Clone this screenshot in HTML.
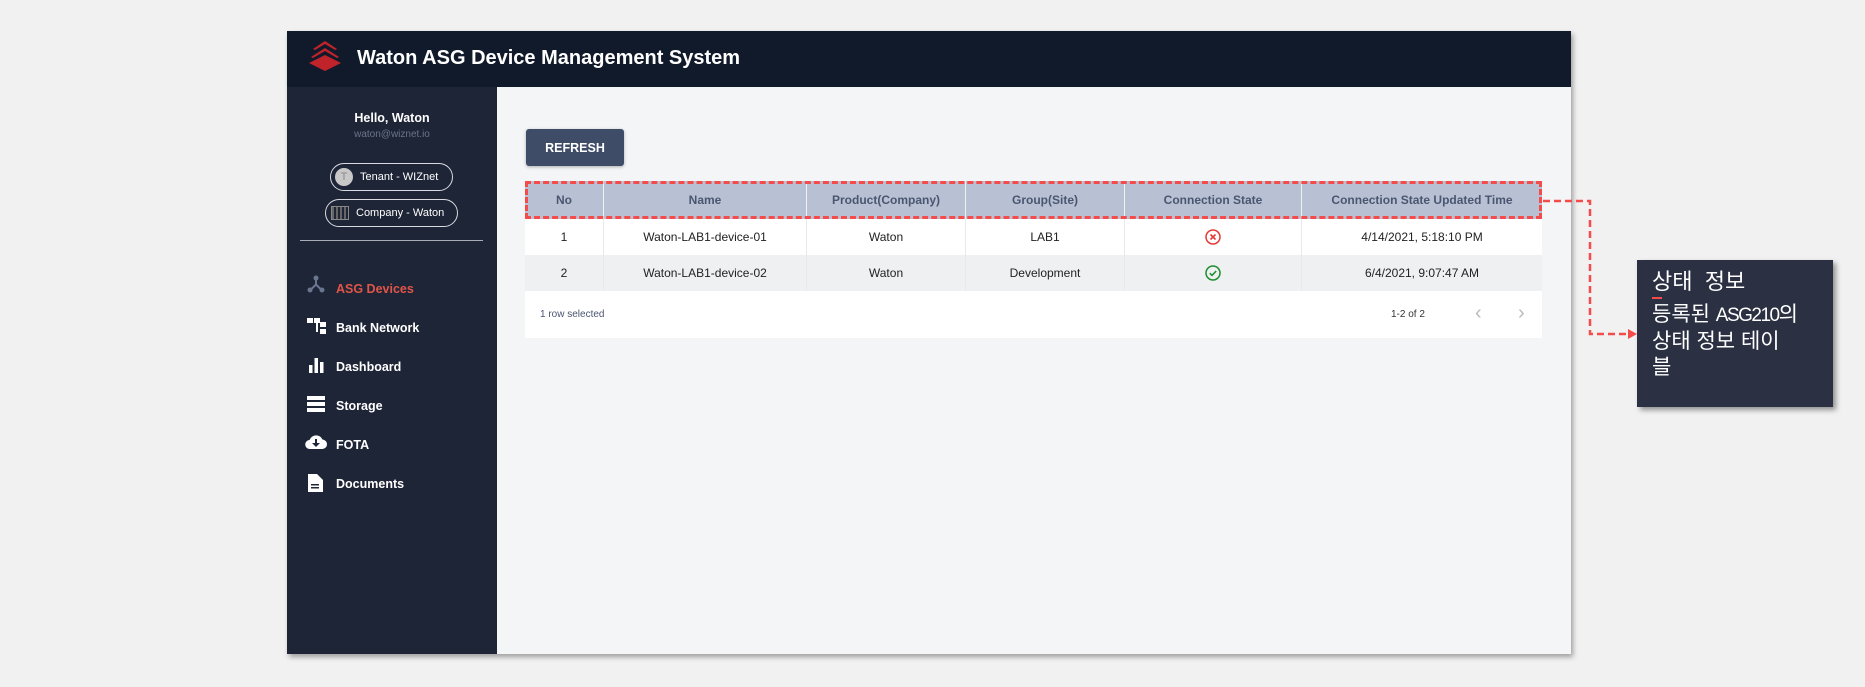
<!DOCTYPE html>
<html><head><meta charset="utf-8"><style>
*{box-sizing:border-box;margin:0;padding:0}
body{width:1865px;height:687px;background:#f1f1f1;position:relative;overflow:hidden;font-family:"Liberation Sans",sans-serif}
.frame{position:absolute;left:287px;top:31px;width:1284px;height:623px;background:#f4f5f7;box-shadow:2px 3px 5px rgba(0,0,0,.35)}
.hdr{position:absolute;left:0;top:0;width:1284px;height:56px;background:#111a2a}
.title{position:absolute;left:70px;top:16px;color:#fff;font-size:20px;font-weight:bold}
.side{position:absolute;left:0;top:56px;width:210px;height:567px;background:#1e2537}
.abs{position:absolute}
.chip{position:absolute;border:1.5px solid #d8dbe2;border-radius:14px;color:#fff;font-size:11px;display:flex;align-items:center}
.mi{position:absolute;left:49px;color:#fff;font-size:12.5px;font-weight:bold}
.ic{position:absolute;left:20px}
.t{position:absolute;left:238px;top:150px;width:1017px}
.row{display:flex;height:36px;align-items:center;font-size:12px;color:#222}
.row div{text-align:center;height:100%;display:flex;align-items:center;justify-content:center;border-right:1px solid #e8e9ec}
.h{background:#b8c1d4;height:38px;color:#4a5570;font-weight:bold;font-size:12px}
.h div{border-right:1px solid #f0f0f0}
</style></head><body>
<div class="frame">
 <div class="hdr">
  <svg class="abs" style="left:20px;top:9px" width="36" height="32" viewBox="0 0 36 32"><path d="M18 1 L30 9 L28 10 L18 4 L8 10 L6 9Z" fill="#c0242a"/><path d="M18 8 L32 17 L30 18 L18 11 L6 18 L4 17Z" fill="#c0242a"/><path d="M18 15 L34 23 L18 31 L2 23Z" fill="#c0242a"/></svg>
  <div class="title">Waton ASG Device Management System</div>
 </div>
 <div class="side">
  <div class="abs" style="left:0;width:210px;top:24px;text-align:center;color:#fff;font-size:12.5px;font-weight:bold">Hello, Waton</div>
  <div class="abs" style="left:0;width:210px;top:42px;text-align:center;color:#6b7489;font-size:10px">waton@wiznet.io</div>
  <div class="chip" style="left:43px;top:76px;width:123px;height:28px"><span style="width:18px;height:18px;border-radius:50%;background:#c8c8c8;color:#888;font-size:11px;display:inline-flex;align-items:center;justify-content:center;margin:0 7px 0 4px">T</span>Tenant - WIZnet</div>
  <div class="chip" style="left:38px;top:112px;width:133px;height:28px"><span style="width:18px;height:14px;border:1px solid #888;margin:0 7px 0 5px;background:repeating-linear-gradient(90deg,#666 0 2px,transparent 2px 4px)"></span>Company - Waton</div>
  <div class="abs" style="left:13px;top:153px;width:183px;height:1px;background:#a8adb8"></div>
  <svg class="ic" style="top:188px" width="18" height="18" viewBox="0 0 18 18" fill="#6a7590"><circle cx="9" cy="3" r="2.5"/><circle cx="3" cy="15" r="2.5"/><circle cx="15" cy="15" r="2.5"/><path d="M8 4h2v5l5 5-1.4 1.4L9 11l-4.6 4.4L3 14l5-5z"/></svg>
  <div class="mi" style="top:195px;color:#e05548">ASG Devices</div>
  <svg class="ic" style="top:231px" width="19" height="17" viewBox="0 0 19 17" fill="#fff"><rect x="0" y="0" width="6" height="5"/><rect x="7" y="0" width="6" height="5"/><rect x="13" y="4" width="6" height="5"/><rect x="13" y="11" width="6" height="5"/><rect x="9" y="4" width="2" height="10"/></svg>
  <div class="mi" style="top:234px">Bank Network</div>
  <svg class="ic" style="top:270px" width="18" height="16" viewBox="0 0 18 16" fill="#fff"><rect x="2" y="8" width="3.5" height="8"/><rect x="7.5" y="1" width="3.5" height="15"/><rect x="13" y="5" width="3.5" height="11"/></svg>
  <div class="mi" style="top:273px">Dashboard</div>
  <svg class="ic" style="top:309px" width="18" height="16" viewBox="0 0 18 16" fill="#fff"><rect y="0" width="18" height="4"/><rect y="6" width="18" height="4"/><rect y="12" width="18" height="4"/></svg>
  <div class="mi" style="top:312px">Storage</div>
  <svg class="ic" style="top:347px;left:18px" width="22" height="16" viewBox="0 0 22 16" fill="#fff"><path d="M5 15a4.5 4.5 0 0 1-.5-9A7 7 0 0 1 17.5 5.5 4.7 4.7 0 0 1 17 15z"/><path d="M10 5h2v4h3l-4 4-4-4h3z" fill="#1e2537"/></svg>
  <div class="mi" style="top:351px">FOTA</div>
  <svg class="ic" style="top:387px;left:21px" width="15" height="18" viewBox="0 0 15 18" fill="#fff"><path d="M0 0h9l6 6v12H0z"/><rect x="3" y="10" width="8" height="1.5" fill="#1e2537"/><rect x="3" y="13" width="8" height="1.5" fill="#1e2537"/></svg>
  <div class="mi" style="top:390px">Documents</div>
 </div>
 <div class="abs" style="left:239px;top:98px;width:98px;height:37px;background:#3f4c68;border-radius:3px;color:#fff;font-weight:bold;font-size:12.5px;display:flex;align-items:center;justify-content:center;box-shadow:0 1px 3px rgba(0,0,0,.3)">REFRESH</div>
 <div class="t">
  <div class="row h"><div style="width:79px">No</div><div style="width:203px">Name</div><div style="width:159px">Product(Company)</div><div style="width:159px">Group(Site)</div><div style="width:177px">Connection State</div><div style="width:240px;border:0">Connection State Updated Time</div></div>
  <div class="row" style="background:#fff"><div style="width:79px">1</div><div style="width:203px">Waton-LAB1-device-01</div><div style="width:159px">Waton</div><div style="width:159px">LAB1</div><div style="width:177px"><svg width="16" height="16" viewBox="0 0 16 16"><circle cx="8" cy="8" r="7" fill="none" stroke="#e53935" stroke-width="1.5"/><path d="M5.5 5.5l5 5M10.5 5.5l-5 5" stroke="#e53935" stroke-width="1.6"/></svg></div><div style="width:240px;border:0">4/14/2021, 5:18:10 PM</div></div>
  <div class="row" style="background:#eff0f2"><div style="width:79px">2</div><div style="width:203px">Waton-LAB1-device-02</div><div style="width:159px">Waton</div><div style="width:159px">Development</div><div style="width:177px"><svg width="16" height="16" viewBox="0 0 16 16"><circle cx="8" cy="8" r="7" fill="none" stroke="#1e8e2e" stroke-width="1.5"/><path d="M4.8 8.2l2.2 2.2 4.2-4.4" fill="none" stroke="#1e8e2e" stroke-width="1.6"/></svg></div><div style="width:240px;border:0">6/4/2021, 9:07:47 AM</div></div>
  <div style="background:#fff;height:47px;position:relative;font-size:10px;color:#4a5570">
   <span class="abs" style="left:15px;top:18px">1 row selected</span>
   <span class="abs" style="left:866px;top:18px;color:#333">1-2 of 2</span>
   <span class="abs" style="left:950px;top:11px;color:#bbb;font-size:20px">&#8249;</span>
   <span class="abs" style="left:993px;top:11px;color:#bbb;font-size:20px">&#8250;</span>
  </div>
 </div>
 <div class="abs" style="left:238px;top:150px;width:1017px;height:38px;border:3px dashed #f44b4b"></div>
</div>
<svg class="abs" style="left:1540px;top:195px" width="100" height="145"><path d="M3 6H50V139H90" fill="none" stroke="#f44b4b" stroke-width="2.5" stroke-dasharray="7 4"/><path d="M88 134L97 139L88 144Z" fill="#f44b4b"/></svg>
<div class="abs" style="left:1637px;top:260px;width:196px;height:147px;background:#2b3142;box-shadow:3px 3px 5px rgba(0,0,0,.4);color:#fff;font-family:'Liberation Sans','Noto Sans CJK KR',sans-serif;font-size:22px;line-height:26px;padding:9px 10px 0 15px;white-space:nowrap">
 <div style="margin-bottom:7px">상태 &nbsp;정보</div>
 <div style="position:absolute;left:15px;top:37px;width:10px;height:2px;background:#f44b4b"></div>
 <div style="font-size:21px">등록된 <span style="letter-spacing:-1.5px;font-size:19px">ASG210</span>의<br>상태 정보 테이<br>블</div>
</div>
</body></html>
